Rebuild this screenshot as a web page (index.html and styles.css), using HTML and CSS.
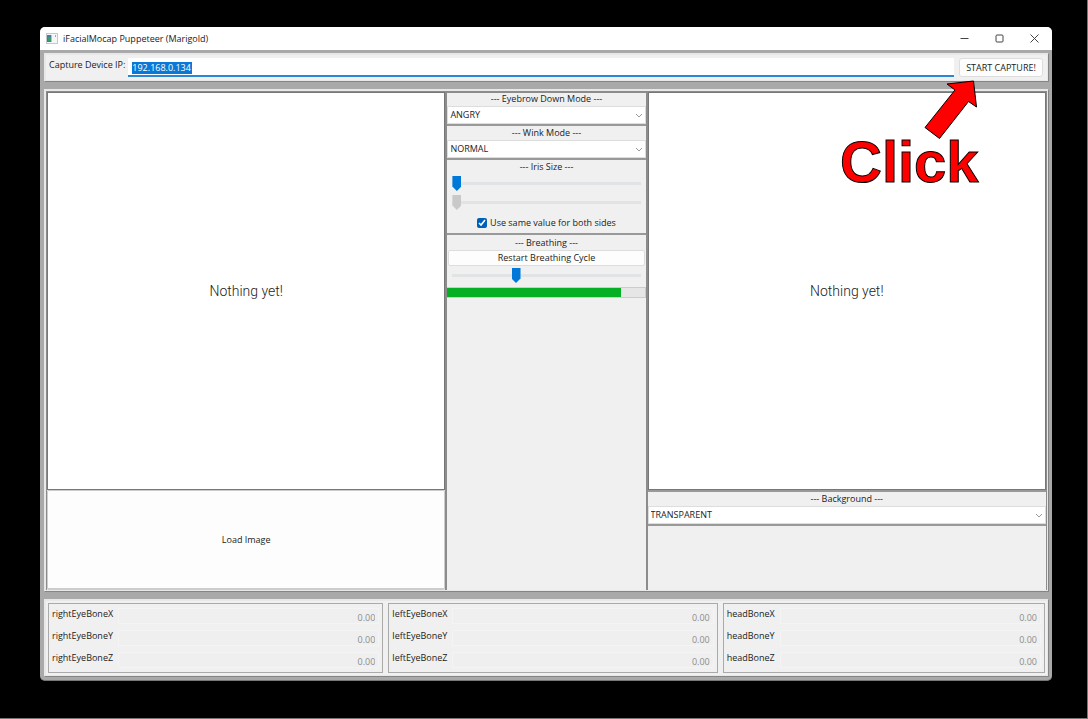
FILE: index.html
```html
<!DOCTYPE html>
<html lang="en">
<head>
<meta charset="utf-8">
<title>iFacialMocap Puppeteer (Marigold)</title>
<link rel="stylesheet" href="styles.css">
</head>
<body>
<main class="window">
  <header class="titlebar">
    <svg class="app-icon" width="12" height="11" viewBox="0 0 12 11" aria-hidden="true">
      <rect x="0.5" y="0.5" width="11" height="10" fill="#f4f6f8" stroke="#c3c9cf"/>
      <rect x="1" y="2" width="4" height="7" fill="#3b82a0"/>
      <rect x="2" y="4" width="3" height="4" fill="#3f9a72"/>
      <rect x="5" y="2" width="1" height="7" fill="#a9c6d4"/>
      <rect x="9" y="2" width="1" height="2" fill="#7cc0a0"/>
    </svg>
    <h1 class="title">iFacialMocap Puppeteer (Marigold)</h1>
    <button class="win-btn" aria-label="Minimize"><svg width="9" height="9" viewBox="0 0 9 9"><path d="M0.5 4.5H8.500"/></svg></button>
    <button class="win-btn" aria-label="Maximize"><svg width="9" height="9" viewBox="0 0 9 9"><rect x="1" y="1" width="7" height="7" rx="1"/></svg></button>
    <button class="win-btn" aria-label="Close"><svg width="9" height="9" viewBox="0 0 9 9"><path d="M0.500 0.500L8.500 8.500M8.500 0.500L0.500 8.500"/></svg></button>
  </header>

  <section class="capture panel">
    <label class="capture-label" for="ip">Capture Device IP:</label>
    <div class="ip-box"><input id="ip" class="ip" type="text" value="192.168.0.134"></div>
    <button class="start">START CAPTURE!</button>
  </section>

  <section class="workspace panel">
    <div class="side">
      <div class="preview">Nothing yet!</div>
      <button class="load">Load Image</button>
    </div>

    <div class="controls">
      <div class="group">
        <label class="heading" for="eyebrow">--- Eyebrow Down Mode ---</label>
        <div class="drop"><select id="eyebrow"><option>ANGRY</option></select><svg width="8" height="5" viewBox="0 0 8 5"><path d="M1 1L4 4L7 1"/></svg></div>
      </div>
      <div class="group">
        <label class="heading" for="wink">--- Wink Mode ---</label>
        <div class="drop"><select id="wink"><option>NORMAL</option></select><svg width="8" height="5" viewBox="0 0 8 5"><path d="M1 1L4 4L7 1"/></svg></div>
      </div>
      <div class="group">
        <div class="heading">--- Iris Size ---</div>
        <input class="slider" type="range" value="0" aria-label="Left iris size">
        <input class="slider" type="range" value="0" disabled aria-label="Right iris size">
        <label class="check"><input type="checkbox" checked>Use same value for both sides</label>
      </div>
      <div class="group breathing">
        <div class="heading">--- Breathing ---</div>
        <button class="restart">Restart Breathing Cycle</button>
        <input class="slider" type="range" value="33" aria-label="Breathing rate">
        <progress class="cycle" value="88" max="100" aria-label="Breathing cycle"></progress>
      </div>
    </div>

    <div class="side">
      <div class="preview">Nothing yet!</div>
      <div class="output">
        <div class="group">
          <label class="heading" for="background">--- Background ---</label>
          <div class="drop"><select id="background"><option>TRANSPARENT</option></select><svg width="8" height="5" viewBox="0 0 8 5"><path d="M1 1L4 4L7 1"/></svg></div>
        </div>
      </div>
    </div>
  </section>

  <section class="bones panel">
    <div class="bone-group">
      <label for="rx">rightEyeBoneX</label><input id="rx" value="0.00" readonly>
      <label for="ry">rightEyeBoneY</label><input id="ry" value="0.00" readonly>
      <label for="rz">rightEyeBoneZ</label><input id="rz" value="0.00" readonly>
    </div>
    <div class="bone-group">
      <label for="lx">leftEyeBoneX</label><input id="lx" value="0.00" readonly>
      <label for="ly">leftEyeBoneY</label><input id="ly" value="0.00" readonly>
      <label for="lz">leftEyeBoneZ</label><input id="lz" value="0.00" readonly>
    </div>
    <div class="bone-group">
      <label for="hx">headBoneX</label><input id="hx" value="0.00" readonly>
      <label for="hy">headBoneY</label><input id="hy" value="0.00" readonly>
      <label for="hz">headBoneZ</label><input id="hz" value="0.00" readonly>
    </div>
  </section>

  <div class="callout">
    <svg class="arrow" width="54" height="60" viewBox="0 0 54 60" aria-hidden="true">
      <path d="M49.500 1L52.500 27L44.500 21.500L15.500 58.500L1 47.500L31 10L23 4Z"/>
    </svg>
    <div class="click">Click</div>
  </div>
</main>
</body>
</html>
```

FILE: styles.css
```css
* { box-sizing: border-box; }

body {
  margin: 0;
  min-height: 100vh;
  display: flex;
  padding: 27px 35px 37px 40px;
  background: #000;
  border-right: 1px solid #777;
  border-bottom: 1px solid #777;
  color: #222;
  font: 9px/12px "Open Sans", "Noto Sans", sans-serif;
}

button, input, select {
  margin: 0;
  padding: 0;
  border: 0;
  color: inherit;
  font: inherit;
}

.window {
  position: relative;
  flex: 1;
  min-width: 0;
  display: flex;
  flex-direction: column;
  gap: 8px;
  padding-bottom: 4px;
  background: #a9a9a9;
  border-bottom: 1px solid #777;
  border-radius: 5px;
  overflow: hidden;
}

.titlebar {
  display: flex;
  align-items: center;
  height: 23px;
  margin-bottom: -5px;
  padding: 0 0 0 6px;
  background: #fff;
}

.title {
  flex: 1;
  margin: 0 0 0 5px;
  font-size: 9px;
  font-weight: 400;
}

.win-btn {
  width: 35px;
  height: 23px;
  background: none;
}

.win-btn svg {
  display: block;
  margin: auto;
  fill: none;
  stroke: #444;
}

.panel {
  margin: 0 4px;
  background: #f0f0f0;
  border: solid #e8e8e8;
  border-width: 2px 1px 1px 2px;
  box-shadow: 1px 1px 0 #858585;
}

.capture {
  display: flex;
  height: 28px;
  padding: 3px 4px 3px 3px;
}

.capture-label {
  padding-top: 1px;
  margin-right: 3px;
}

.ip-box {
  flex: 1;
  padding: 4px 0 0 4px;
  background: #fff;
  border-bottom: 2px solid #2b87d3;
}

.ip {
  display: block;
  width: 60px;
  height: 12px;
  background: #0a78d6;
  color: #fff;
}

.start {
  width: 84px;
  margin-left: 5px;
  background: #fdfdfd;
  border: 1px solid #ddd;
  border-radius: 3px;
}

.workspace {
  flex: 1;
  display: grid;
  grid-template-columns: 2fr 1fr 2fr;
  min-height: 0;
}

.side {
  display: grid;
  grid-template-rows: 4fr 1fr;
  border: solid #8c8c8c;
  border-width: 1px 1px 0;
}

.preview {
  display: flex;
  align-items: center;
  justify-content: center;
  background: #fff;
  border: 1px solid #777;
  color: #222;
  font: 300 14px/18px Roboto, sans-serif;
}

.load {
  background: #fdfdfd;
  border: solid #ccc;
  border-width: 1px 1px 2px;
  border-radius: 2px;
}

.controls {
  border: solid #8c8c8c;
  border-width: 2px 1px 0;
}

.group {
  display: flex;
  flex-direction: column;
  margin-bottom: 1px;
  border-bottom: 2px solid #999;
}

.heading {
  height: 13px;
  text-align: center;
}

.drop {
  display: grid;
  align-items: center;
  height: 18px;
  background: #fff;
  border: 1px solid #ddd;
}

.drop select,
.drop svg {
  grid-area: 1 / 1;
}

.drop select {
  appearance: none;
  width: 100%;
  height: 16px;
  padding-left: 2px;
  background: none;
}

.drop svg {
  justify-self: end;
  margin-right: 2px;
  fill: none;
  stroke: #999;
  pointer-events: none;
}

.slider {
  appearance: none;
  height: 19px;
  margin: 0 5px;
  background: none;
}

.slider::-webkit-slider-runnable-track {
  height: 3px;
  background: #e1e4e4;
}

.slider::-webkit-slider-thumb {
  appearance: none;
  width: 9px;
  height: 15px;
  margin-top: -6px;
  background: #0078d7;
  clip-path: polygon(0 0, 100% 0, 100% 70%, 50% 100%, 0 70%);
}

.slider:disabled::-webkit-slider-thumb {
  background: #c9c9c9;
}

.check {
  display: flex;
  align-items: center;
  justify-content: center;
  gap: 3px;
  height: 21px;
}

.check input {
  width: 10px;
  height: 10px;
  accent-color: #005fb8;
}

.breathing {
  border: 0;
  padding-top: 1px;
}

.restart {
  height: 16px;
  margin: 0 1px;
  background: #fdfdfd;
  border: 1px solid #ddd;
  border-radius: 2px;
}

.cycle {
  appearance: none;
  width: 100%;
  height: 11px;
  margin-top: 2px;
}

.cycle::-webkit-progress-bar {
  background: #e6e6e6;
  border: 1px solid #ccc;
  border-left: 0;
}

.cycle::-webkit-progress-value {
  background: #06b025;
}

.output {
  padding-top: 1px;
  border-top: 2px solid #999;
}

.bones {
  display: flex;
  gap: 5px;
  padding: 2px;
}

.bone-group {
  flex: 1 1 auto;
  display: grid;
  grid-template-columns: auto 1fr;
  column-gap: 5px;
  row-gap: 6px;
  padding: 4px 3px;
  border: 1px solid #aaa;
}

.bone-group input {
  width: 100%;
  min-width: 0;
  height: 16px;
  padding: 2px 3px 0 0;
  background: #efefef;
  border: 1px solid #f4f4f4;
  color: #8c8c8c;
  text-align: right;
}

.callout {
  position: absolute;
  top: 53px;
  right: 72px;
  width: 140px;
  pointer-events: none;
}

.arrow {
  display: block;
  margin-left: 84px;
  fill: #f00;
  stroke: #000;
}

.click {
  margin-top: -10px;
  color: #f00;
  font: bold 58px/64px "Liberation Sans", Arial, sans-serif;
  -webkit-text-stroke: 1px #000;
}
```
